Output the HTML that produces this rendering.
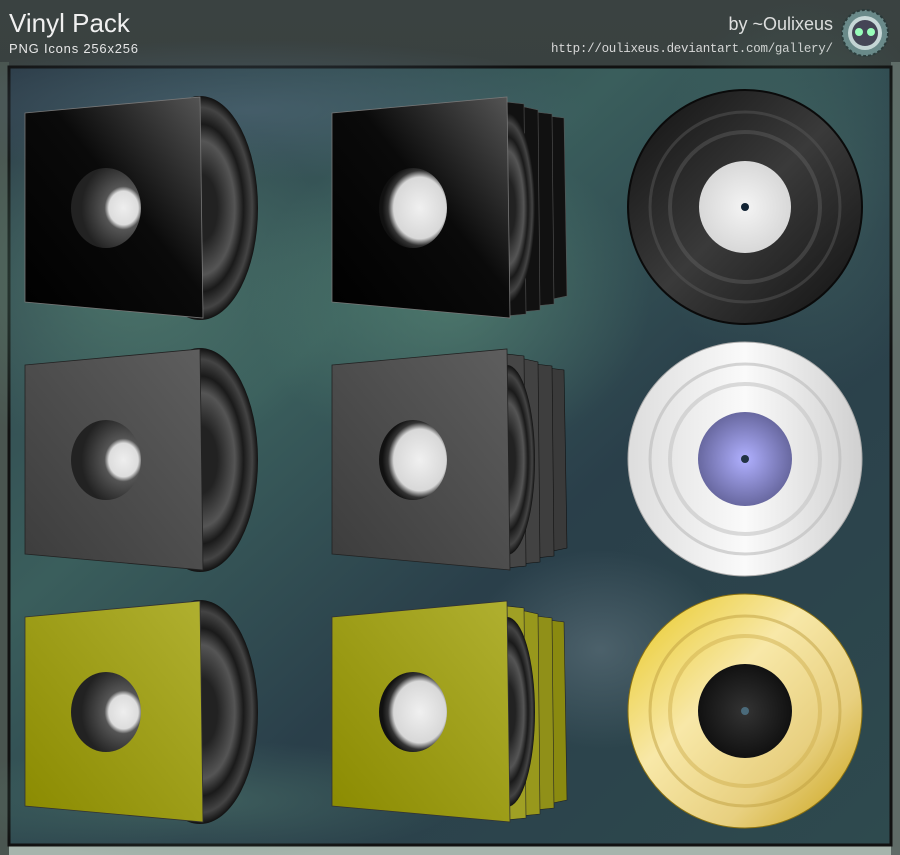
<!DOCTYPE html>
<html><head><meta charset="utf-8"><style>
html,body{margin:0;padding:0;width:900px;height:855px;overflow:hidden;background:#333b3a}
</style></head><body>
<svg width="900" height="855" viewBox="0 0 900 855" xmlns="http://www.w3.org/2000/svg">
<defs>
<linearGradient id="top" x1="0" y1="0" x2="0" y2="1"><stop offset="0" stop-color="#3a4241"/><stop offset="1" stop-color="#2f3635"/></linearGradient>
<linearGradient id="pbg" x1="0" y1="0" x2="1" y2="1"><stop offset="0" stop-color="#2c3c48"/><stop offset="0.35" stop-color="#3a5e5c"/><stop offset="0.6" stop-color="#2a3f4a"/><stop offset="1" stop-color="#2e4a4e"/></linearGradient>
<radialGradient id="g1" cx="0.5" cy="0.5" r="0.5"><stop offset="0" stop-color="#5a8a78" stop-opacity="0.6"/><stop offset="1" stop-color="#5a8a78" stop-opacity="0"/></radialGradient>
<radialGradient id="g2" cx="0.5" cy="0.5" r="0.5"><stop offset="0" stop-color="#5a6e78" stop-opacity="0.7"/><stop offset="1" stop-color="#5a6e78" stop-opacity="0"/></radialGradient>
<radialGradient id="g3" cx="0.5" cy="0.5" r="0.5"><stop offset="0" stop-color="#506878" stop-opacity="0.6"/><stop offset="1" stop-color="#506878" stop-opacity="0"/></radialGradient>
<linearGradient id="sBlack" x1="0" y1="1" x2="1" y2="0"><stop offset="0" stop-color="#000"/><stop offset="0.55" stop-color="#0a0a0a"/><stop offset="1" stop-color="#555"/></linearGradient>
<linearGradient id="sGrey" x1="0" y1="1" x2="1" y2="0"><stop offset="0" stop-color="#3c3c3c"/><stop offset="1" stop-color="#5e5e5e"/></linearGradient>
<linearGradient id="sYel" x1="0" y1="1" x2="1" y2="0"><stop offset="0" stop-color="#8a8a00"/><stop offset="1" stop-color="#b0b030"/></linearGradient>
<radialGradient id="vin" cx="0.5" cy="0.5" r="0.5"><stop offset="0.3" stop-color="#222"/><stop offset="0.6" stop-color="#555"/><stop offset="0.75" stop-color="#1a1a1a"/><stop offset="0.9" stop-color="#444"/><stop offset="1" stop-color="#111"/></radialGradient>
<radialGradient id="hole" cx="0.75" cy="0.5" r="0.6"><stop offset="0" stop-color="#eee"/><stop offset="0.35" stop-color="#ddd"/><stop offset="0.45" stop-color="#555"/><stop offset="1" stop-color="#222"/></radialGradient>
<radialGradient id="hole2" cx="0.6" cy="0.5" r="0.55"><stop offset="0" stop-color="#f0f0f0"/><stop offset="0.7" stop-color="#d8d8d8"/><stop offset="0.85" stop-color="#333"/><stop offset="1" stop-color="#111"/></radialGradient>
<linearGradient id="dBlack" x1="0" y1="0" x2="1" y2="1"><stop offset="0" stop-color="#111"/><stop offset="0.5" stop-color="#3a3a3a"/><stop offset="1" stop-color="#111"/></linearGradient>
<linearGradient id="dSil" x1="0" y1="0" x2="1" y2="0"><stop offset="0" stop-color="#ddd"/><stop offset="0.5" stop-color="#fafafa"/><stop offset="1" stop-color="#d0d0d0"/></linearGradient>
<linearGradient id="dGold" x1="0" y1="0" x2="1" y2="1"><stop offset="0" stop-color="#e8c820"/><stop offset="0.4" stop-color="#f8e8a8"/><stop offset="0.7" stop-color="#e8d080"/><stop offset="1" stop-color="#c8a010"/></linearGradient>
<radialGradient id="lPur" cx="0.5" cy="0.5" r="0.5"><stop offset="0" stop-color="#b0b0ff"/><stop offset="1" stop-color="#6868a0"/></radialGradient>
<radialGradient id="lBlk" cx="0.5" cy="0.5" r="0.5"><stop offset="0" stop-color="#333"/><stop offset="1" stop-color="#111"/></radialGradient>
<radialGradient id="lWht" cx="0.5" cy="0.5" r="0.5"><stop offset="0" stop-color="#f4f4f4"/><stop offset="1" stop-color="#d8d8d8"/></radialGradient>
</defs>
<rect width="900" height="855" fill="url(#top)"/>
<rect x="0" y="846" width="900" height="9" fill="#a6b4ac"/>
<rect x="0" y="62" width="9" height="793" fill="#4a5550"/>
<rect x="891" y="62" width="9" height="793" fill="#5f6b67"/>
<text x="9" y="32" font-family="Liberation Sans Narrow, Liberation Sans, sans-serif" font-size="26" fill="#f0f0f0" transform="scale(1,1)">Vinyl Pack</text>
<text x="9" y="53" font-family="Liberation Sans, sans-serif" font-size="13" fill="#e8e8e8" textLength="129">PNG Icons 256x256</text>
<text x="833" y="30" text-anchor="end" font-family="Liberation Sans, sans-serif" font-size="18" fill="#e0e0e0">by ~Oulixeus</text>
<text x="551" y="52" font-family="Liberation Mono, monospace" font-size="12.5" fill="#d8d8d8" textLength="282">http://oulixeus.deviantart.com/gallery/</text>
<circle cx="865" cy="33" r="23" fill="#6a8a8a" stroke="#2a3a3a" stroke-width="2" stroke-dasharray="3 2"/>
<circle cx="865" cy="33" r="17" fill="#c8d8d8"/><circle cx="865" cy="33" r="13" fill="#445"/>
<circle cx="859" cy="32" r="4" fill="#9fb"/><circle cx="871" cy="32" r="4" fill="#9fb"/>
<rect x="9" y="67" width="882" height="778" fill="url(#pbg)" stroke="#111" stroke-width="3"/>
<ellipse cx="130" cy="280" rx="220" ry="180" fill="url(#g1)"/>
<ellipse cx="450" cy="300" rx="200" ry="160" fill="url(#g1)"/>
<ellipse cx="250" cy="110" rx="350" ry="70" fill="url(#g3)"/>
<ellipse cx="600" cy="650" rx="130" ry="100" fill="url(#g2)"/>
<ellipse cx="800" cy="200" rx="150" ry="200" fill="url(#g1)" opacity="0.6"/>
<ellipse cx="200" cy="800" rx="260" ry="60" fill="url(#g1)" opacity="0.7"/>

<g>
<ellipse cx="200" cy="208" rx="58" ry="112" fill="url(#vin)"/>
<polygon points="25,113 200,97 203,318 25,302" fill="url(#sBlack)" stroke="#777" stroke-width="0.8"/>
<ellipse cx="106" cy="208" rx="35" ry="40" fill="url(#hole)"/>
</g>
<g transform="translate(0,252)">
<ellipse cx="200" cy="208" rx="58" ry="112" fill="url(#vin)"/>
<polygon points="25,113 200,97 203,318 25,302" fill="url(#sGrey)" stroke="#222" stroke-width="0.8"/>
<ellipse cx="106" cy="208" rx="35" ry="40" fill="url(#hole)"/>
</g>
<g transform="translate(0,504)">
<ellipse cx="200" cy="208" rx="58" ry="112" fill="url(#vin)"/>
<polygon points="25,113 200,97 203,318 25,302" fill="url(#sYel)" stroke="#333" stroke-width="0.8"/>
<ellipse cx="106" cy="208" rx="35" ry="40" fill="url(#hole)"/>
</g>

<g>
<polygon points="548,116 564,118 567,296 548,300" fill="#111" stroke="#555" stroke-width="0.6"/>
<polygon points="535,112 552,114 554,304 535,306" fill="#111" stroke="#555" stroke-width="0.6"/>
<polygon points="520,106 538,110 540,310 520,312" fill="#111" stroke="#555" stroke-width="0.6"/>
<polygon points="506,102 524,104 526,314 506,316" fill="#111" stroke="#555" stroke-width="0.6"/>
<ellipse cx="507" cy="208" rx="28" ry="95" fill="url(#vin)"/>
<polygon points="332,113 507,97 510,318 332,302" fill="url(#sBlack)" stroke="#777" stroke-width="0.8"/>
<ellipse cx="413" cy="208" rx="34" ry="40" fill="url(#hole2)"/>
</g>
<g transform="translate(0,252)">
<polygon points="548,116 564,118 567,296 548,300" fill="#3a3a3a" stroke="#111" stroke-width="0.6"/>
<polygon points="535,112 552,114 554,304 535,306" fill="#3e3e3e" stroke="#111" stroke-width="0.6"/>
<polygon points="520,106 538,110 540,310 520,312" fill="#424242" stroke="#111" stroke-width="0.6"/>
<polygon points="506,102 524,104 526,314 506,316" fill="#464646" stroke="#111" stroke-width="0.6"/>
<ellipse cx="507" cy="208" rx="28" ry="95" fill="url(#vin)"/>
<polygon points="332,113 507,97 510,318 332,302" fill="url(#sGrey)" stroke="#222" stroke-width="0.8"/>
<ellipse cx="413" cy="208" rx="34" ry="40" fill="url(#hole2)"/>
</g>
<g transform="translate(0,504)">
<polygon points="548,116 564,118 567,296 548,300" fill="#8a8a10" stroke="#222" stroke-width="0.6"/>
<polygon points="535,112 552,114 554,304 535,306" fill="#909018" stroke="#222" stroke-width="0.6"/>
<polygon points="520,106 538,110 540,310 520,312" fill="#98981c" stroke="#222" stroke-width="0.6"/>
<polygon points="506,102 524,104 526,314 506,316" fill="#a0a024" stroke="#222" stroke-width="0.6"/>
<ellipse cx="507" cy="208" rx="28" ry="95" fill="url(#vin)"/>
<polygon points="332,113 507,97 510,318 332,302" fill="url(#sYel)" stroke="#333" stroke-width="0.8"/>
<ellipse cx="413" cy="208" rx="34" ry="40" fill="url(#hole2)"/>
</g>

<circle cx="745" cy="207" r="117" fill="url(#dBlack)" stroke="#0a0a0a" stroke-width="2"/>
<circle cx="745" cy="207" r="95" fill="none" stroke="#555" stroke-width="3" opacity="0.5"/>
<circle cx="745" cy="207" r="75" fill="none" stroke="#666" stroke-width="4" opacity="0.4"/>
<circle cx="745" cy="207" r="46" fill="url(#lWht)"/>
<circle cx="745" cy="207" r="4" fill="#123"/>

<circle cx="745" cy="459" r="117" fill="url(#dSil)" stroke="#aaa" stroke-width="1"/>
<circle cx="745" cy="459" r="95" fill="none" stroke="#bbb" stroke-width="3" opacity="0.6"/>
<circle cx="745" cy="459" r="75" fill="none" stroke="#c4c4c4" stroke-width="4" opacity="0.6"/>
<circle cx="745" cy="459" r="47" fill="url(#lPur)"/>
<circle cx="745" cy="459" r="4" fill="#234"/>

<circle cx="745" cy="711" r="117" fill="url(#dGold)" stroke="#8a7010" stroke-width="1"/>
<circle cx="745" cy="711" r="95" fill="none" stroke="#c0a040" stroke-width="3" opacity="0.5"/>
<circle cx="745" cy="711" r="75" fill="none" stroke="#d0b050" stroke-width="4" opacity="0.5"/>
<circle cx="745" cy="711" r="47" fill="url(#lBlk)"/>
<circle cx="745" cy="711" r="4" fill="#4a6a7a"/>
</svg>
</body></html>
